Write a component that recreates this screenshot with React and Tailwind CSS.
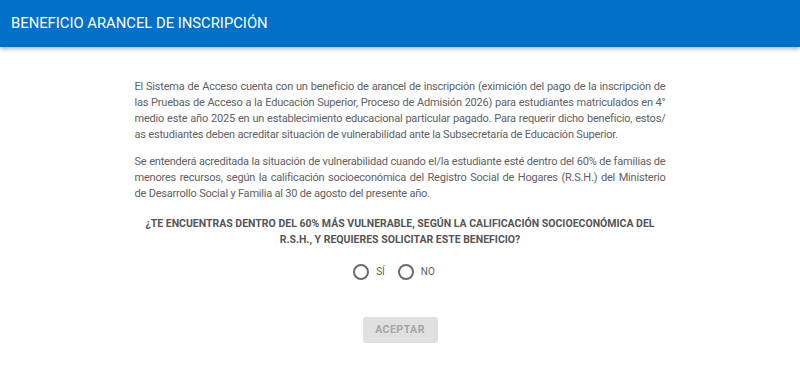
import React from 'react';

function Radio({ label }) {
  return (
    <label className="flex items-center gap-[7px] cursor-pointer">
      <span className="w-[16px] h-[16px] rounded-full border-2 border-[#6b6b6b] bg-white" />
      <span className="text-[10px] text-[#616161]">{label}</span>
    </label>
  );
}

export default function App() {
  return (
    <div className="w-[800px] h-[375px] bg-white overflow-hidden" style={{ fontFamily: 'Roboto, "Liberation Sans", sans-serif' }}>
      <header className="h-[47px] bg-[#0070c9] shadow-[0_2px_4px_rgba(0,0,0,0.3)] flex items-center px-[11px]">
        <h1 className="text-white text-[14.8px] font-normal">BENEFICIO ARANCEL DE INSCRIPCIÓN</h1>
      </header>

      <main className="w-[531px] mx-auto pt-[32px] text-[11px] leading-[16px] tracking-[-0.2px] text-[#616161]">
        <p className="text-justify">
          El Sistema de Acceso cuenta con un beneficio de arancel de inscripción (eximición del pago de la inscripción de las Pruebas de Acceso a la Educación Superior, Proceso de Admisión 2026) para estudiantes matriculados en 4° medio este año 2025 en un establecimiento educacional particular pagado. Para requerir dicho beneficio, estos/ as estudiantes deben acreditar situación de vulnerabilidad ante la Subsecretaría de Educación Superior.
        </p>
        <p className="text-justify mt-[11px]">
          Se entenderá acreditada la situación de vulnerabilidad cuando el/la estudiante esté dentro del 60% de familias de menores recursos, según la calificación socioeconómica del Registro Social de Hogares (R.S.H.) del Ministerio de{'\u00a0'}Desarrollo Social y Familia al 30 de agosto del presente año.
        </p>
        <p className="mt-[14px] text-center font-bold text-[10.5px] leading-[16px] tracking-normal text-[#555555]">
          ¿TE ENCUENTRAS DENTRO DEL 60% MÁS VULNERABLE, SEGÚN LA CALIFICACIÓN SOCIOECONÓMICA DEL R.S.H., Y REQUIERES SOLICITAR ESTE BENEFICIO?
        </p>

        <div className="flex justify-center gap-[13px] mt-[16px] pr-[12px] tracking-normal">
          <Radio label="SÍ" />
          <Radio label="NO" />
        </div>

        <div className="flex justify-center mt-[37px]">
          <button
            type="button"
            disabled
            className="w-[75px] h-[26px] rounded-[3px] bg-[#e0e0e0] text-[#a6a6a6] text-[10.5px] font-bold tracking-[0.5px]"
          >
            ACEPTAR
          </button>
        </div>
      </main>
    </div>
  );
}
